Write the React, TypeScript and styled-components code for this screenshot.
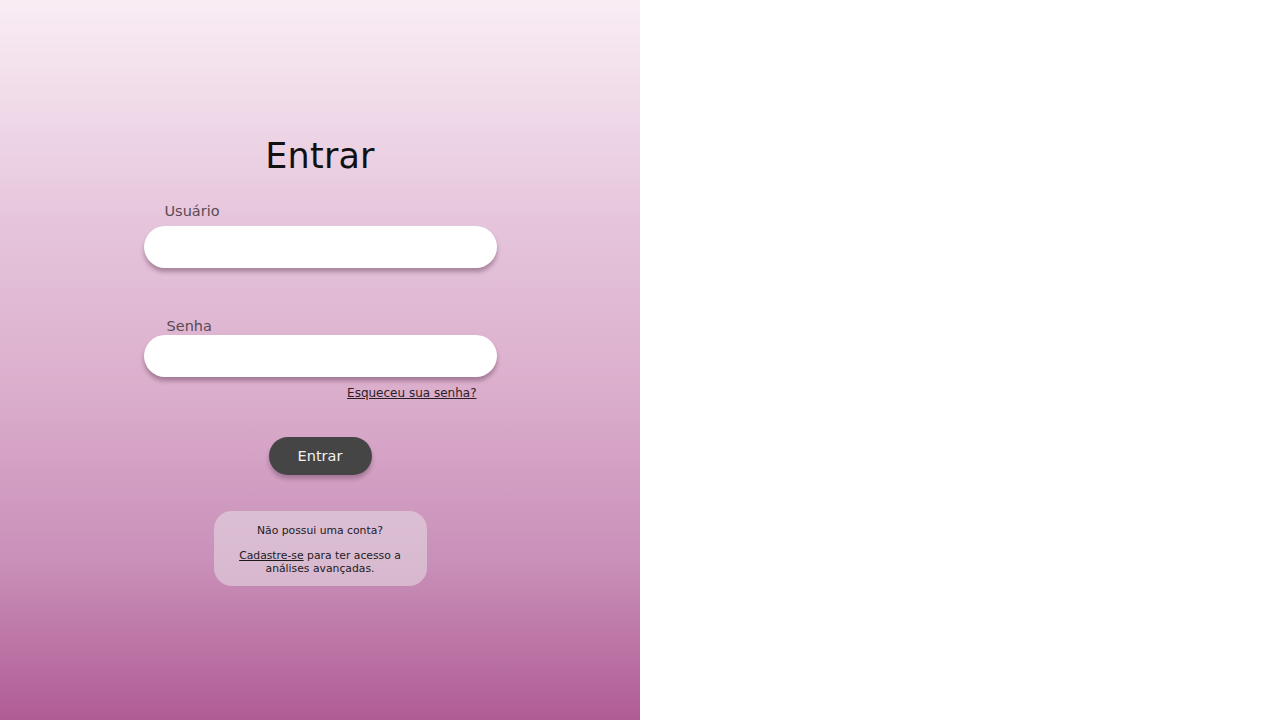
import React from "react";
import styled, { createGlobalStyle } from "styled-components";

const Global = createGlobalStyle`
  html, body { margin: 0; padding: 0; background: #ffffff; }
  body { font-family: "DejaVu Sans", "Noto Sans", sans-serif; }
  * { box-sizing: border-box; }
`;

const Page = styled.div`
  display: flex;
  width: 1280px;
  height: 720px;
`;

const LeftPanel = styled.section`
  width: 640px;
  height: 720px;
  background: linear-gradient(180deg, #f9edf4 0%, #e6c6dc 30%, #dbadcc 55%, #c990b9 78%, #b05c94 100%);
  display: flex;
  flex-direction: column;
  align-items: center;
  padding-top: 132px;
`;

const RightPanel = styled.div`
  flex: 1;
  background: #ffffff;
`;

const Title = styled.h1`
  margin: 0;
  font-family: "DejaVu Sans", sans-serif;
  font-weight: 400;
  font-size: 35px;
  line-height: 48px;
  color: #111111;
  letter-spacing: 0.2px;
`;

const Form = styled.form`
  width: 353px;
  display: flex;
  flex-direction: column;
  margin-top: 23px;
`;

const Label = styled.label<{ $indent: number; $top: number; $bottom: number }>`
  font-size: 14.5px;
  line-height: 16px;
  color: #5a4a55;
  padding-left: ${(p) => p.$indent}px;
  margin-top: ${(p) => p.$top}px;
  margin-bottom: ${(p) => p.$bottom}px;
`;

const Input = styled.input`
  width: 353px;
  height: 42px;
  border: none;
  border-radius: 21px;
  background: #ffffff;
  box-shadow: 0 4px 4px rgba(60, 30, 50, 0.35);
  outline: none;
  padding: 0 20px;
  font-size: 15px;
`;

const ForgotRow = styled.div`
  display: flex;
  justify-content: flex-end;
  padding-right: 20px;
  margin-top: 8px;
`;

const SmallLink = styled.a`
  font-size: 12px;
  line-height: 16px;
  color: #2a1f27;
  text-decoration: underline;
  cursor: pointer;
`;

const Button = styled.button`
  margin-top: 36px;
  width: 103px;
  height: 38px;
  border: none;
  border-radius: 19px;
  background: #454545;
  color: #f2f2f2;
  font-family: "DejaVu Sans", sans-serif;
  font-size: 14.5px;
  box-shadow: 0 4px 4px rgba(60, 30, 50, 0.3);
  cursor: pointer;
`;

const InfoCard = styled.div`
  margin-top: 36px;
  width: 213px;
  height: 75px;
  border-radius: 18px;
  background: rgba(230, 222, 228, 0.55);
  display: flex;
  flex-direction: column;
  align-items: center;
  padding-top: 13px;
  text-align: center;
  font-size: 10.8px;
  line-height: 13px;
  color: #1e1a1d;
`;

const CardLine = styled.p<{ $top?: number }>`
  margin: ${(p) => p.$top ?? 0}px 0 0;
`;

const CardLink = styled.a`
  color: #1e1a1d;
  text-decoration: underline;
  cursor: pointer;
`;

export default function App() {
  return (
    <>
      <Global />
      <Page>
        <LeftPanel>
          <Title>Entrar</Title>
          <Form onSubmit={(e) => e.preventDefault()}>
            <Label $indent={21} $top={0} $bottom={7}>Usuário</Label>
            <Input type="text" />
            <Label $indent={23} $top={50} $bottom={1}>Senha</Label>
            <Input type="password" />
            <ForgotRow>
              <SmallLink>Esqueceu sua senha?</SmallLink>
            </ForgotRow>
          </Form>
          <Button type="button">Entrar</Button>
          <InfoCard>
            <CardLine>Não possui uma conta?</CardLine>
            <CardLine $top={12}>
              <CardLink>Cadastre-se</CardLink> para ter acesso a
              <br />
              análises avançadas.
            </CardLine>
          </InfoCard>
        </LeftPanel>
        <RightPanel />
      </Page>
    </>
  );
}
